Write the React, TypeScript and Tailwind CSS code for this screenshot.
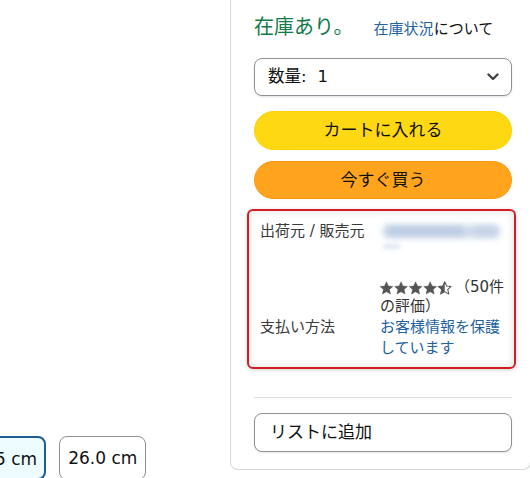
import React from "react";

function Star({ x, half }: { x: number; half?: boolean }) {
  const d =
    "M7 0.3 L9.1 4.9 L14 5.3 L10.3 8.6 L11.4 13.6 L7 11 L2.6 13.6 L3.7 8.6 L0 5.3 L4.9 4.9 Z";
  return (
    <g transform={`translate(${x},0)`}>
      {half ? (
        <>
          <defs>
            <clipPath id="halfclip">
              <rect x="0" y="0" width="7" height="14" />
            </clipPath>
          </defs>
          <path d={d} fill="none" stroke="#555" strokeWidth="1.1" strokeLinejoin="round" />
          <path d={d} fill="#555" clipPath="url(#halfclip)" />
        </>
      ) : (
        <path d={d} fill="#555" stroke="#555" strokeWidth="0.5" strokeLinejoin="round" />
      )}
    </g>
  );
}

export default function App() {
  return (
    <div className="w-[530px] h-[478px] overflow-hidden bg-white flex font-['DejaVu_Sans','Noto_Sans_CJK_JP',sans-serif] text-[#0f1111]">
      {/* left area */}
      <div className="w-[230px] shrink-0 flex flex-col">
        <div className="mt-[218px] h-px w-[180px] bg-[#e3e3e3]" />
        <div className="mt-[218px] flex gap-[13px]">
          <div className="-ml-[41px] h-[44px] px-[7px] rounded-[8px] border-2 border-[#1f5d96] bg-[#edfdff] flex items-center text-[17px] whitespace-nowrap leading-none pt-[2px]">
            25.5 cm
          </div>
          <div className="h-[44px] px-[8px] rounded-[8px] border border-[#8d9096] bg-white flex items-center text-[17px] whitespace-nowrap leading-none pt-[1px]">
            26.0 cm
          </div>
        </div>
      </div>

      {/* right card */}
      <div className="w-[301px] shrink-0 h-[470px] border-l border-r border-b border-[#d5d9d9] rounded-b-[8px] pl-[23px]">
        <div className="w-[258px] flex flex-col">
          {/* stock */}
          <div className="mt-[13px] h-[28px] flex items-baseline whitespace-nowrap">
            <span className="text-[20px] leading-[28px] text-[#127a48]">在庫あり。</span>
            <span className="ml-[20px] text-[15px] leading-[28px]">
              <span className="text-[#2162a1]">在庫状況</span>について
            </span>
          </div>

          {/* quantity select */}
          <div className="mt-[17px] h-[38px] rounded-[8px] border border-[#8d9096] bg-white shadow-[0_1px_2px_rgba(15,17,17,0.12)] flex items-center pl-[13px] pr-[12px]">
            <span className="text-[16.5px] leading-none whitespace-nowrap">
              数量:<span className="ml-[11px]">1</span>
            </span>
            <svg className="ml-auto" width="12" height="8" viewBox="0 0 12 8">
              <path d="M1.5 1.5 L6 6 L10.5 1.5" fill="none" stroke="#454545" strokeWidth="2.4" strokeLinecap="round" strokeLinejoin="round" />
            </svg>
          </div>

          {/* buttons */}
          <div className="mt-[15px] h-[39px] rounded-full bg-[#ffd814] border border-[#fcd200] flex items-center justify-center text-[17px] leading-none">
            カートに入れる
          </div>
          <div className="mt-[11px] h-[38px] rounded-full bg-[#ffa41c] border border-[#ff9a10] flex items-center justify-center text-[17px] leading-none">
            今すぐ買う
          </div>

          {/* highlighted info box */}
          <div className="mt-[10px] -ml-[7px] w-[269px] h-[160px] rounded-[6px] border-2 border-[#d31c24] shadow-[inset_0_0_8px_rgba(0,0,0,0.13),0_1px_4px_rgba(0,0,0,0.18)] pl-[11px] pt-[10px] text-[15px]">
            <div className="grid grid-cols-[120px_124px]">
              <div className="leading-[21px] text-[#3a3a3a] whitespace-nowrap">出荷元 / 販売元</div>
              <div className="flex flex-col">
                <div className="relative h-[58px]">
                  <div className="absolute left-[3px] top-[4px] w-[117px] h-[13px] bg-[#cfdbeb] blur-[3px] rounded" />
                  <div className="absolute left-[8px] top-[6px] w-[75px] h-[8px] bg-[#b8c9e0] blur-[3px]" />
                  <div className="absolute left-[95px] top-[6px] w-[20px] h-[8px] bg-[#c3d1e5] blur-[3px]" />
                  <div className="absolute left-[3px] top-[23px] w-[17px] h-[5px] bg-[#dfe6f0] blur-[2px]" />
                </div>
                <div className="h-[17px] flex items-center whitespace-nowrap">
                  <svg width="78" height="14" viewBox="0 0 78 14">
                    <Star x={0} />
                    <Star x={15.8} />
                    <Star x={31.6} />
                    <Star x={47.4} />
                    <Star x={63.2} half />
                  </svg>
                  <span className="ml-[3px] leading-[17px] text-[#333]">（50件</span>
                </div>
                <div className="leading-[21px] text-[#333]">の評価）</div>
              </div>
              <div className="leading-[21px] text-[#3a3a3a] whitespace-nowrap">支払い方法</div>
              <div className="leading-[21px] text-[#2162a1]">
                お客様情報を保護
                <br />
                しています
              </div>
            </div>
          </div>

          {/* divider */}
          <div className="mt-[28px] h-px bg-[#dddddd]" />

          {/* add to list */}
          <div className="mt-[15px] h-[39px] rounded-[8px] border border-[#8d9096] bg-white shadow-[0_1px_2px_rgba(15,17,17,0.1)] flex items-center pl-[15px] text-[17px] leading-none">
            リストに追加
          </div>
        </div>
      </div>
    </div>
  );
}
